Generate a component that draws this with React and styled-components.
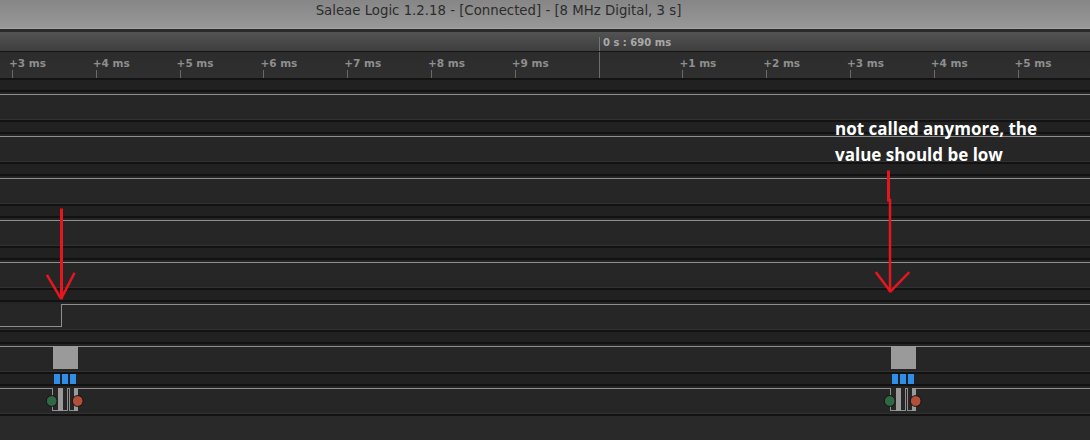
import React from "react";
import styled, { createGlobalStyle } from "styled-components";

const GlobalStyle = createGlobalStyle`
  html, body { margin: 0; padding: 0; background: #282828; overflow: hidden; }
  * { box-sizing: border-box; }
`;

const Window = styled.div`
  position: relative;
  width: 1090px;
  height: 440px;
  display: flex;
  flex-direction: column;
  overflow: hidden;
  background: #282828;
  font-family: "DejaVu Sans", "Liberation Sans", sans-serif;
`;

const TitleBar = styled.div`
  flex: none;
  height: 29px;
  padding-right: 93px;
  background: linear-gradient(#868686, #989898);
  border-bottom: 1px solid #a6a6a6;
  display: flex;
  align-items: center;
  justify-content: center;
  padding-bottom: 8px;
  color: #2c2c2c;
  font-size: 13.3px;
  white-space: nowrap;
`;

const TimeBar = styled.div`
  flex: none;
  height: 23px;
  border-top: 3px solid #2a2a2a;
  border-bottom: 1px solid #151515;
  background: linear-gradient(#535353, #3e3e3e);
  padding-left: 599px;
  display: flex;
`;

const Cursor = styled.div`
  margin-top: 5px;
  border-left: 1px solid #767676;
  padding-left: 3px;
  padding-top: 1px;
  color: #a9a9a9;
  font-size: 10px;
  font-weight: bold;
  line-height: 10px;
  white-space: nowrap;
`;

const Ruler = styled.div`
  flex: none;
  height: 28px;
  background: linear-gradient(#2c2c2c, #2f2f2f);
  border-bottom: 2px solid #141414;
  padding-left: 12px;
  display: flex;
`;

const TickCell = styled.div`
  flex: none;
  width: 83.8px;
  display: flex;
  flex-direction: column;
  box-shadow: ${(p) => (p.$cursor ? "inset 1px 0 0 #6c6c6c" : "none")};
`;

const TickLabel = styled.div`
  margin-left: -3px;
  margin-top: 6px;
  color: #8e8e8e;
  font-size: 10.5px;
  font-weight: bold;
  line-height: 11px;
  white-space: nowrap;
`;

const Tick = styled.div`
  margin-top: auto;
  width: 1px;
  height: 8px;
  background: #6a6a6a;
`;

const Channels = styled.div`
  flex: none;
  display: flex;
  flex-direction: column;
`;

const ChannelBox = styled.div`
  display: flex;
  flex-direction: column;
`;

const Band = styled.div`
  height: 10px;
  background: #212121;
  border-bottom: 2px solid #121212;
  box-sizing: content-box;
`;

const Gap = styled.div`
  height: 2px;
  background: #242424;
`;

const Trace = styled.div`
  height: 25px;
  background: #262626;
  border-bottom: 1px solid #323232;
  box-sizing: content-box;
`;

const TraceFoot = styled.div`
  height: 2px;
  background: #121212;
`;

const Empty = styled.div`
  flex: 1;
  background: #292929;
`;

const Overlay = styled.svg`
  position: absolute;
  left: 0;
  top: 0;
  pointer-events: none;
`;

const Note = styled.div`
  position: absolute;
  left: 835px;
  top: 116px;
  color: #ffffff;
  font-family: "Open Sans", "Noto Sans", sans-serif;
  font-weight: 700;
  font-size: 17px;
  line-height: 26px;
  white-space: nowrap;
`;

const LINE = "#8f8f8f";
const FILL = "#9a9a9a";

const Svg = ({ h, children }) => (
  <svg width="1090" height={h} viewBox={`0 0 1090 ${h}`} style={{ display: "block" }} shapeRendering="crispEdges">
    {children}
  </svg>
);

const OFFS = [0, 838];

const waves = {
  high: <path d="M0 0.5 H1090" stroke={LINE} fill="none" />,
  step: <path d="M0 22.5 H61.5 V0.5 H1090" stroke={LINE} fill="none" />,
  block: (
    <>
      <path d="M0 0.5 H1090" stroke={LINE} fill="none" />
      {OFFS.map((o) => (
        <rect key={o} x={53 + o} y={0} width={25} height={23} fill={FILL} />
      ))}
    </>
  ),
  pulses: (
    <>
      <path
        d={
          "M0 0.5 " +
          OFFS.map(
            (o) =>
              `H${52.5 + o} V22.5 H${58 + o} M${62.5 + o} 22.5 H${67.5 + o} V0.5 H${69.5 + o} V22.5 H${73.5 + o} M${77.5 + o} 0.5`
          ).join(" ") +
          " H1090"
        }
        stroke={LINE}
        fill="none"
      />
      {OFFS.map((o) => (
        <g key={o}>
          <rect x={58 + o} y={0} width={4.5} height={23} fill={FILL} />
          <rect x={73.5 + o} y={0} width={4} height={23} fill={FILL} />
        </g>
      ))}
      {OFFS.map((o) => (
        <g key={"c" + o} shapeRendering="auto">
          <circle cx={51.7 + o} cy={13} r={5.4} fill="#2e6943" stroke="#141414" strokeWidth="1" />
          <circle cx={77.7 + o} cy={13} r={5.4} fill="#b24f39" stroke="#141414" strokeWidth="1" />
        </g>
      ))}
    </>
  ),
};

const decode = (
  <>
    {OFFS.map((o) =>
      [54, 62, 70].map((x) => <rect key={o + x} x={x + o} y={0} width={5.5} height={10} fill="#2f8fe8" />)
    )}
  </>
);

const channels = [
  { wave: "high" },
  { wave: "high" },
  { wave: "high" },
  { wave: "high" },
  { wave: "high" },
  { wave: "step" },
  { wave: "block" },
  { wave: "pulses", band: decode },
];

const Channel = ({ wave, band }) => (
  <ChannelBox>
    <Band>{band ? <Svg h={10}>{band}</Svg> : null}</Band>
    <Gap />
    <Trace>
      <Svg h={25}>{waves[wave]}</Svg>
    </Trace>
    <TraceFoot />
  </ChannelBox>
);

const ticks = ["+3 ms", "+4 ms", "+5 ms", "+6 ms", "+7 ms", "+8 ms", "+9 ms", null, "+1 ms", "+2 ms", "+3 ms", "+4 ms", "+5 ms"];

const RED = "#e5161e";

export default function App() {
  return (
    <>
      <GlobalStyle />
      <Window>
        <TitleBar>Saleae Logic 1.2.18 - [Connected] - [8 MHz Digital, 3 s]</TitleBar>
        <TimeBar>
          <Cursor>0 s : 690 ms</Cursor>
        </TimeBar>
        <Ruler>
          {ticks.map((t, i) => (
            <TickCell key={i} $cursor={t === null}>
              {t && <TickLabel>{t}</TickLabel>}
              {t && <Tick />}
            </TickCell>
          ))}
        </Ruler>
        <Channels>
          {channels.map((c, i) => (
            <Channel key={i} {...c} />
          ))}
        </Channels>
        <Empty />
        <Note>
          not called anymore, the
          <br />
          value should be low
        </Note>
        <Overlay width="1090" height="440" viewBox="0 0 1090 440">
          <g stroke={RED} fill="none" strokeLinecap="square">
            <path d="M61.5 210 V298" strokeWidth="3" />
            <path d="M47.5 276 L60 297 M74 274 L62 297" strokeWidth="2.5" />
            <path d="M888.5 172 V200" strokeWidth="3" />
            <path d="M890 200 V291" strokeWidth="2.5" />
            <path d="M876.5 273 L890 291 M908.5 273 L891 291" strokeWidth="2.5" />
          </g>
        </Overlay>
      </Window>
    </>
  );
}
